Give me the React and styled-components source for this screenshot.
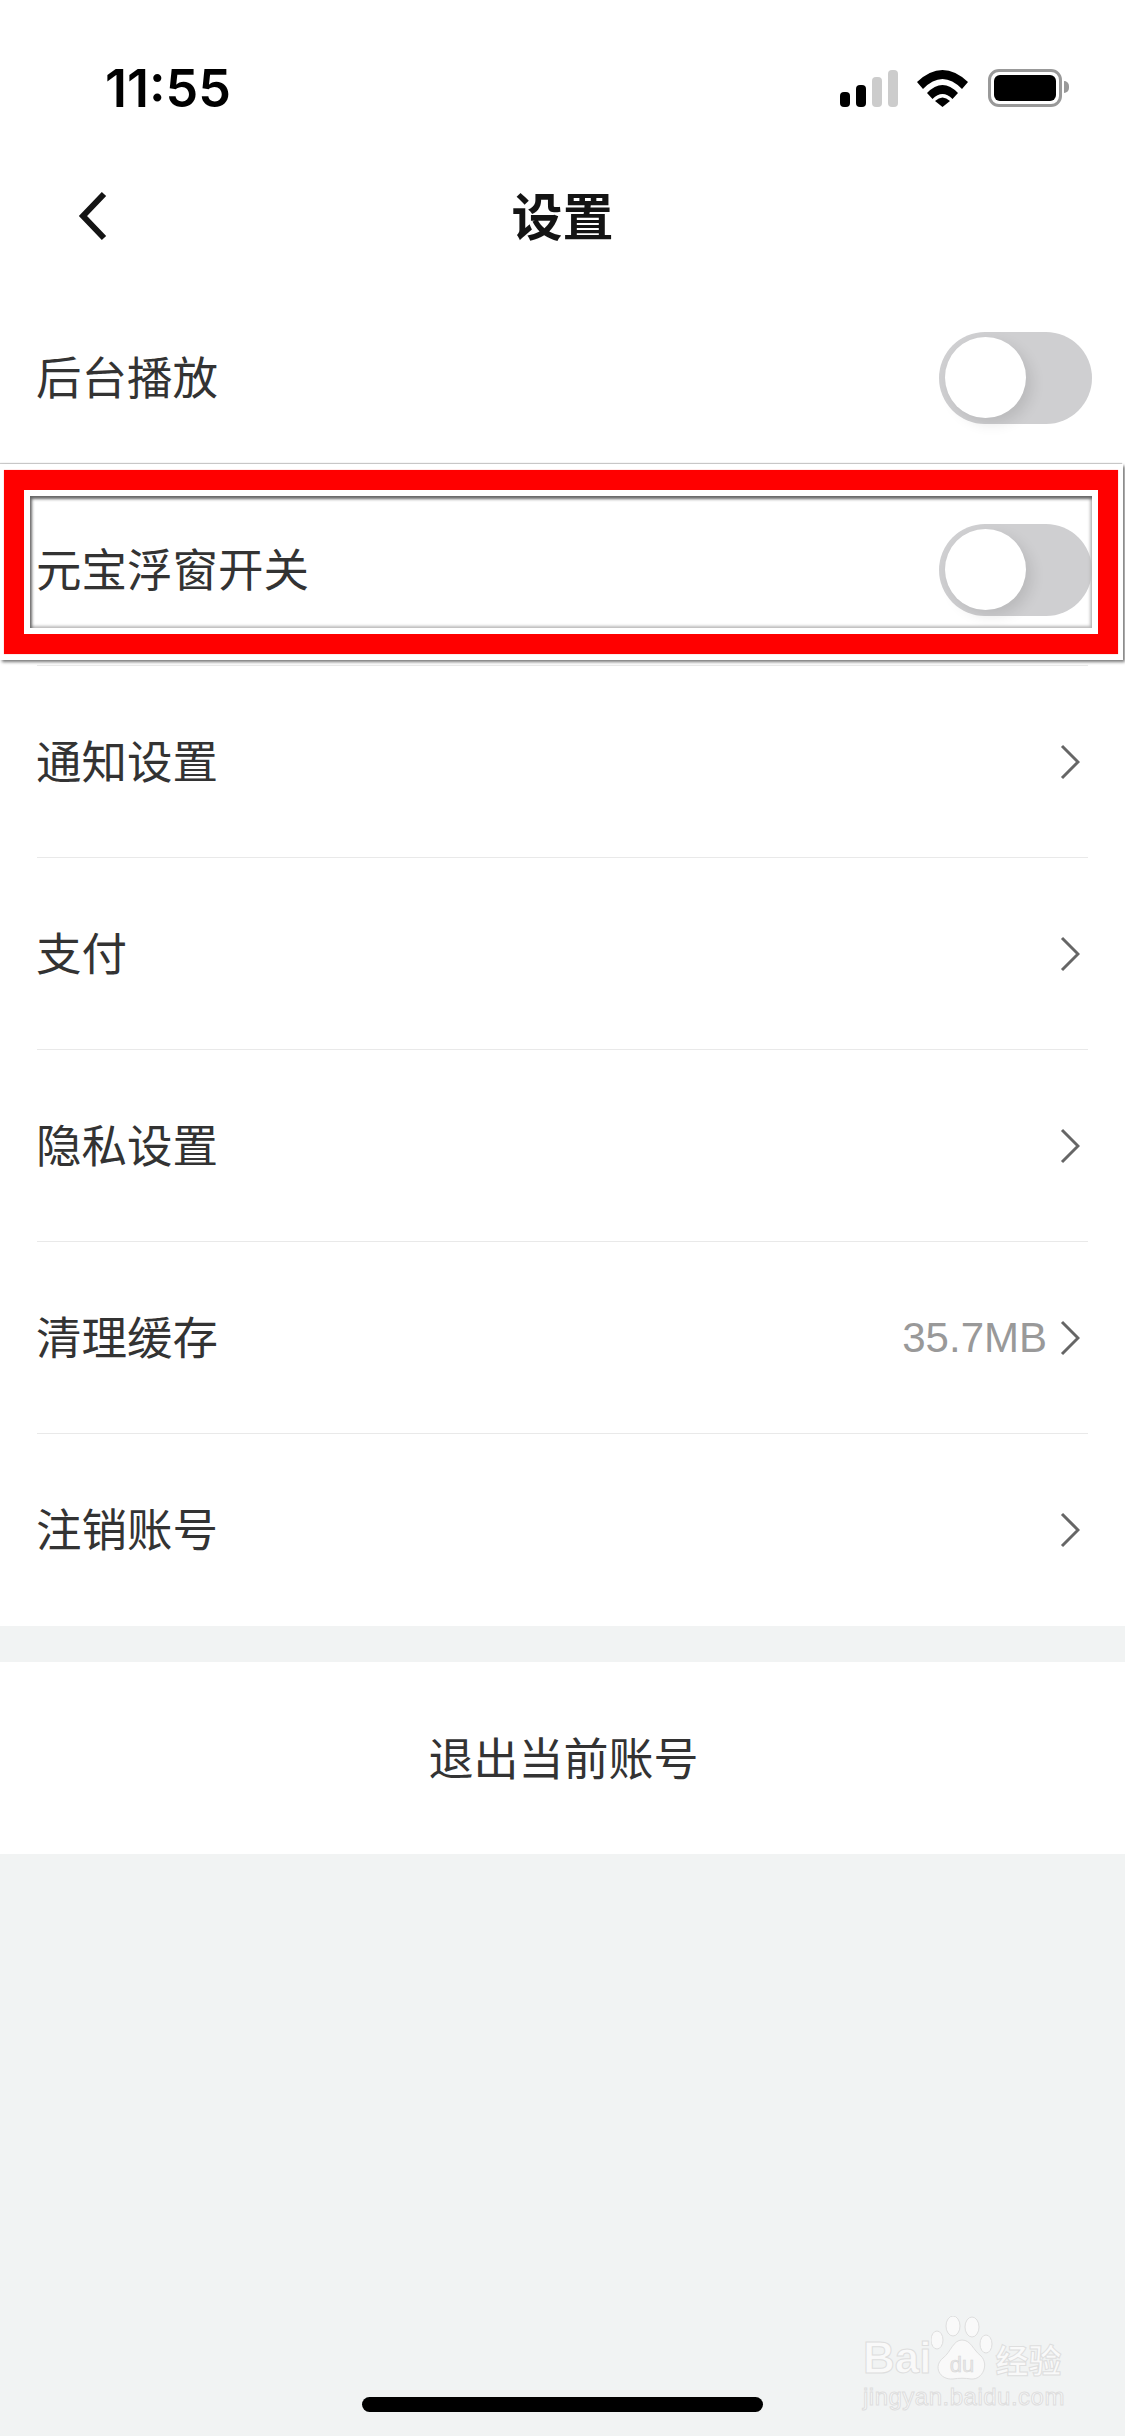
import React from 'react';
import styled, {createGlobalStyle} from 'styled-components';

const GlobalStyle = createGlobalStyle`
  html, body {
    margin: 0;
    padding: 0;
    background: #f1f3f3;
  }
  * {
    box-sizing: border-box;
  }
`;

const Page = styled.div`
  width: 1125px;
  height: 2436px;
  display: flex;
  flex-direction: column;
  overflow: hidden;
  background: #f1f3f3;
  font-family: "Noto Sans CJK SC", "Liberation Sans", sans-serif;
  color: #333;
`;

const StatusBar = styled.div`
  height: 150px;
  background: #fff;
  display: flex;
  justify-content: space-between;
  padding: 69px 63px 0 105px;
`;

const Time = styled.div`
  font-family: Inter, "Liberation Sans", sans-serif;
  font-weight: 600;
  font-size: 52px;
  line-height: 40px;
  color: #000;
`;

const StatusIcons = styled.div`
  display: flex;
  align-items: flex-end;
  height: 38px;
`;

const Signal = styled.div`
  display: flex;
  align-items: flex-end;
  gap: 6px;
  margin-right: 19px;
`;

const Bar = styled.span`
  width: 10px;
  height: ${props => props.$h}px;
  border-radius: 4px;
  background: ${props => props.$on ? '#000' : '#ccc'};
`;

const Battery = styled.div`
  position: relative;
  width: 74px;
  height: 38px;
  margin-left: 20px;
  padding: 3px;
  border: 3px solid #999;
  border-radius: 11px;

  &::before {
    content: '';
    display: block;
    height: 100%;
    background: #000;
    border-radius: 6px;
  }

  &::after {
    content: '';
    position: absolute;
    right: -10px;
    top: 9px;
    width: 5px;
    height: 12px;
    background: #999;
    border-radius: 0 6px 6px 0;
  }
`;

const NavBar = styled.div`
  position: relative;
  height: 132px;
  background: #fff;
  display: flex;
  align-items: center;
  justify-content: center;
`;

const BackIcon = styled.svg`
  position: absolute;
  left: 78px;
  top: 41px;
`;

const Title = styled.div`
  font-size: 51px;
  font-weight: 700;
  line-height: 60px;
  padding-bottom: 4px;
  color: #141414;
`;

const List = styled.div`
  background: #fff;
`;

const Row = styled.div`
  position: relative;
  height: 192px;
  padding: 0 37px;
  background: #fff;
`;

const RowInner = styled.div`
  height: 100%;
  display: flex;
  align-items: center;
  justify-content: space-between;
  border-bottom: ${props => props.$last ? '0' : '1px solid #e9e9e9'};
`;

const Label = styled.div`
  font-size: 45.5px;
  line-height: 60px;
  padding-bottom: 6px;
  margin-left: -1px;
  font-weight: 400;
  color: #333;
`;

const Right = styled.div`
  display: flex;
  align-items: center;
  gap: 13px;
  margin-right: 8px;
`;

const Value = styled.span`
  font-family: "Liberation Sans", sans-serif;
  font-size: 42px;
  color: #999;
`;

const Toggle = styled.div`
  width: 153px;
  height: 92px;
  margin-right: -4px;
  padding: 5px 6px;
  border-radius: 46px;
  background: #cfcfd1;
`;

const Knob = styled.div`
  width: 81px;
  height: 81px;
  border-radius: 50%;
  background: #fff;
  box-shadow: 6px 6px 14px rgba(0, 0, 0, 0.1);
`;

// red annotation drawn over the second row of the screenshot
const Marker = styled.div`
  position: absolute;
  top: -10px;
  left: 0;
  width: 1123px;
  height: 196px;
  border: solid #fff;
  border-width: 6px 5px 6px 4px;
  box-shadow: 2px 2px 3px #777, -1px -1px 1px #ccc;
  pointer-events: none;
`;

const MarkerRed = styled.div`
  height: 100%;
  border: 20px solid #f00;
  box-shadow: 0 0 1px #f88;
`;

const MarkerFrame = styled.div`
  height: 100%;
  border: 6px solid #fff;
  box-shadow: inset 0 0 1px #f88;
`;

const MarkerShot = styled.div`
  height: 100%;
  box-shadow: inset 2px 3px 3px #666, inset -2px -2px 3px #bbb;
`;

const Logout = styled.div`
  margin-top: 36px;
  height: 192px;
  background: #fff;
  display: flex;
  align-items: center;
  justify-content: center;
  font-size: 45px;
  line-height: 60px;
  padding: 0 0 2px 2px;
  color: #333;
`;

const Bottom = styled.div`
  position: relative;
  flex: 1;
  display: flex;
  align-items: flex-end;
  justify-content: center;
  padding-bottom: 24px;
`;

const HomeBar = styled.div`
  width: 401px;
  height: 15px;
  border-radius: 8px;
  background: #000;
`;

const Watermark = styled.div`
  position: absolute;
  left: 863px;
  bottom: 24px;
  display: flex;
  flex-direction: column;
  font-family: "Liberation Sans", sans-serif;
  color: #f9f9f9;
  -webkit-text-stroke: 1px #dedede;
`;

const MarkTop = styled.div`
  display: flex;
  align-items: flex-end;
  height: 66px;
  white-space: nowrap;
`;

const MarkBai = styled.span`
  font-size: 44px;
  font-weight: 700;
  line-height: 48px;
`;

const MarkCn = styled.span`
  flex: none;
  font-family: "Noto Sans CJK SC", sans-serif;
  font-size: 33px;
  font-weight: 700;
  line-height: 46px;
  margin-left: 2px;
`;

const MarkUrl = styled.div`
  font-size: 24px;
  line-height: 30px;
  letter-spacing: 0.5px;
  white-space: nowrap;
`;

const WifiIcon = () => (
  <svg width="51" height="37" viewBox="0 0 51 37">
    <path d="M0 12 Q25.5 -12 51 12 L45 19 Q25.5 -1 6 19 Z" fill="#000"/>
    <path d="M10 23 Q25.5 7 41 23 L35.5 29 Q25.5 19 15.5 29 Z" fill="#000"/>
    <path d="M18 31 Q25.5 24 33 31 L25.5 37 Z" fill="#000"/>
  </svg>
);

const Chevron = () => (
  <svg width="20" height="36" viewBox="0 0 20 36">
    <path d="M2 2 L18 18 L2 34" fill="none" stroke="#666" strokeWidth="3"/>
  </svg>
);

const Paw = () => (
  <svg width="62" height="66" viewBox="0 0 62 66" style={{flex: 'none'}}>
    <g fill="#f9f9f9" stroke="#dedede" strokeWidth="1">
      <ellipse cx="6" cy="24" rx="6" ry="9"/>
      <ellipse cx="22" cy="10" rx="7" ry="10"/>
      <ellipse cx="41" cy="11" rx="7" ry="10"/>
      <ellipse cx="55" cy="28" rx="6" ry="9"/>
      <path d="M31 24 C40 24 42 34 50 40 C58 48 52 64 40 63 C34 62 28 62 22 63 C8 64 2 50 12 42 C20 36 22 24 31 24 Z"/>
    </g>
    <text x="31" y="56" textAnchor="middle" fontSize="22" fontFamily="Liberation Sans" fill="#e8e8e8" stroke="#d4d4d4" strokeWidth="0.5">du</text>
  </svg>
);

const rows = [
  {label: '后台播放', toggle: true},
  {label: '元宝浮窗开关', toggle: true, marked: true},
  {label: '通知设置'},
  {label: '支付'},
  {label: '隐私设置'},
  {label: '清理缓存', value: '35.7MB'},
  {label: '注销账号', last: true}
];

const App = () => {
  return (
    <Page>
      <GlobalStyle/>
      <StatusBar>
        <Time>11:55</Time>
        <StatusIcons>
          <Signal>
            <Bar $h={15} $on/>
            <Bar $h={22} $on/>
            <Bar $h={30}/>
            <Bar $h={37}/>
          </Signal>
          <WifiIcon/>
          <Battery/>
        </StatusIcons>
      </StatusBar>
      <NavBar>
        <BackIcon width="30" height="50" viewBox="0 0 30 50">
          <path d="M26 3 L5 25 L26 47" fill="none" stroke="#141414" strokeWidth="6"/>
        </BackIcon>
        <Title>设置</Title>
      </NavBar>
      <List>
        {rows.map(row => (
          <Row key={row.label}>
            <RowInner $last={row.last}>
              <Label>{row.label}</Label>
              {row.toggle ? (
                <Toggle><Knob/></Toggle>
              ) : (
                <Right>
                  {row.value && <Value>{row.value}</Value>}
                  <Chevron/>
                </Right>
              )}
            </RowInner>
            {row.marked && (
              <Marker>
                <MarkerRed>
                  <MarkerFrame>
                    <MarkerShot/>
                  </MarkerFrame>
                </MarkerRed>
              </Marker>
            )}
          </Row>
        ))}
      </List>
      <Logout>退出当前账号</Logout>
      <Bottom>
        <HomeBar/>
        <Watermark>
          <MarkTop>
            <MarkBai>Bai</MarkBai>
            <Paw/>
            <MarkCn>经验</MarkCn>
          </MarkTop>
          <MarkUrl>jingyan.baidu.com</MarkUrl>
        </Watermark>
      </Bottom>
    </Page>
  );
};

export default App;
